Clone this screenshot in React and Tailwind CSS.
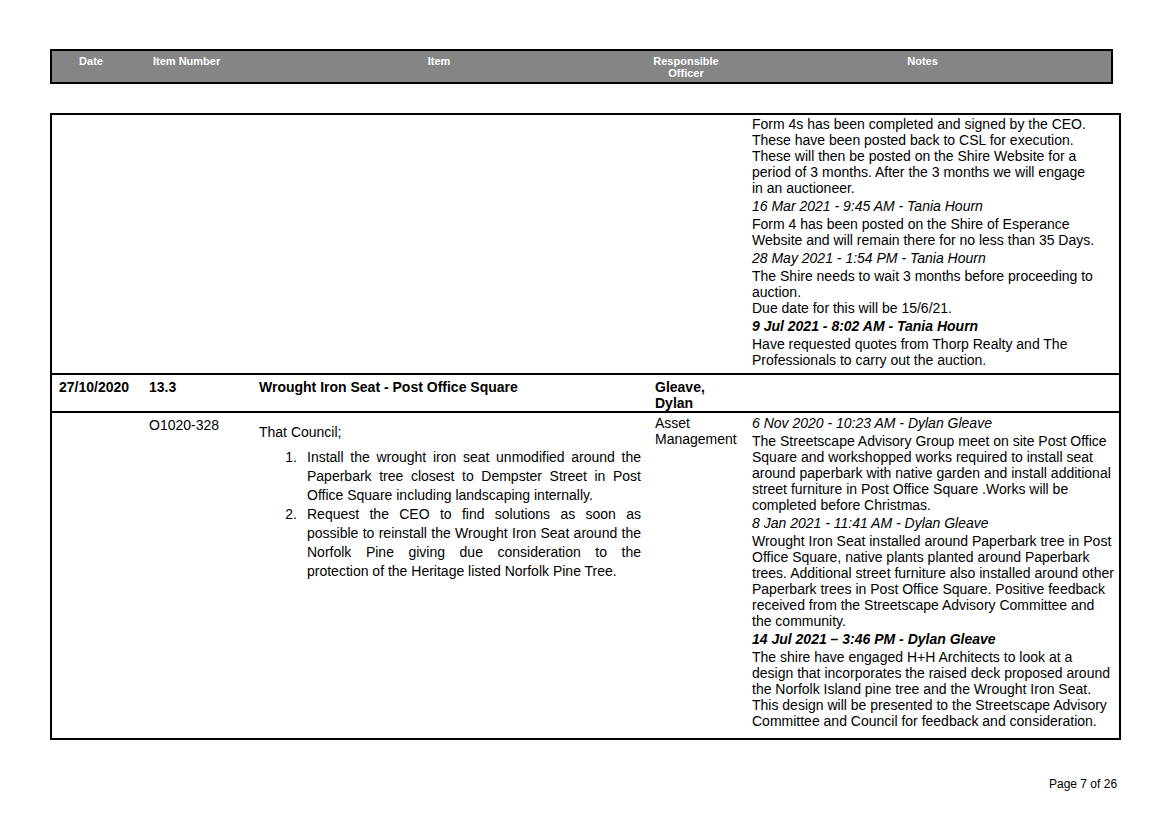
const notesA = [
  ["p", "Form 4s has been completed and signed by the CEO. These have been posted back to CSL for execution. These will then be posted on the Shire Website for a period of 3 months. After the 3 months we will engage in an auctioneer."],
  ["i", "16 Mar 2021 - 9:45 AM - Tania Hourn"],
  ["p", "Form 4 has been posted on the Shire of Esperance Website and will remain there for no less than 35 Days."],
  ["i", "28 May 2021 - 1:54 PM - Tania Hourn"],
  ["p", "The Shire needs to wait 3 months before proceeding to auction.\nDue date for this will be 15/6/21."],
  ["b", "9 Jul 2021 - 8:02 AM - Tania Hourn"],
  ["p", "Have requested quotes from Thorp Realty and The Professionals to carry out the auction."],
];

const notesB = [
  ["i", "6 Nov 2020 - 10:23 AM - Dylan Gleave"],
  ["p", "The Streetscape Advisory Group meet on site Post Office Square and workshopped works required to install seat around paperbark with native garden and install additional street furniture in Post Office Square .Works will be completed before Christmas."],
  ["i", "8 Jan 2021 - 11:41 AM - Dylan Gleave"],
  ["p", "Wrought Iron Seat installed around Paperbark tree in Post Office Square, native plants planted around Paperbark trees. Additional street furniture also installed around other Paperbark trees in Post Office Square. Positive feedback received from the Streetscape Advisory Committee and the community."],
  ["b", "14 Jul 2021 – 3:46 PM - Dylan Gleave"],
  ["p", "The shire have engaged H+H Architects to look at a design that incorporates the raised deck proposed around the Norfolk Island pine tree and the Wrought Iron Seat. This design will be presented to the Streetscape Advisory Committee and Council for feedback and consideration."],
];

function Notes({ items }) {
  return (
    <div className="flex flex-col gap-[2px]">
      {items.map(([k, t], i) => (
        <p
          key={i}
          className={
            "whitespace-pre-line " +
            (k === "i" ? "italic" : k === "b" ? "italic font-bold" : "")
          }
        >
          {t}
        </p>
      ))}
    </div>
  );
}

export default function App() {
  return (
    <div
      className="w-[1160px] h-[821px] bg-white text-black relative text-[14px] leading-[16px]"
      style={{ fontFamily: '"Liberation Sans", Arial, sans-serif' }}
    >
      <div className="pt-[49px] pl-[50px]">
        <div className="w-[1063px] h-[35px] bg-[#858585] border-2 border-black flex text-white font-bold text-[11px] leading-[12px] pt-[4px]">
          <div className="w-[78px] text-center">Date</div>
          <div className="w-[110px] pl-[23px]">Item Number</div>
          <div className="w-[398px] text-center">Item</div>
          <div className="w-[96px] text-center">Responsible<br />Officer</div>
          <div className="flex-1 text-center">Notes</div>
        </div>

        <div className="mt-[29px] w-[1071px] border-2 border-black">
          <div className="grid grid-cols-[95px_110px_396px_96px_1fr] h-[258px]">
            <div />
            <div />
            <div />
            <div />
            <div className="pl-[3px] pt-[1px] pr-[22px]">
              <Notes items={notesA} />
            </div>
          </div>
          <div className="grid grid-cols-[95px_110px_396px_96px_1fr] border-t-2 border-black font-bold h-[38px] pt-[4px]">
            <div className="pl-[7px]">27/10/2020</div>
            <div className="pl-[2px]">13.3</div>
            <div className="pl-[2px]">Wrought Iron Seat - Post Office Square</div>
            <div className="pl-[2px]">Gleave,<br />Dylan</div>
            <div />
          </div>
          <div className="grid grid-cols-[95px_110px_396px_96px_1fr] border-t-2 border-black h-[327px] pt-[2px]">
            <div />
            <div className="pl-[2px] pt-[2px]">O1020-328</div>
            <div className="pl-[2px] pr-[12px] pt-[8px] leading-[19px]">
              <p>That Council;</p>
              <ol className="mt-[6px] pl-[18px] flex flex-col">
                <li className="flex gap-[10px]">
                  <span className="w-[20px] text-right shrink-0">1.</span>
                  <span className="text-justify">Install the wrought iron seat unmodified around the Paperbark tree closest to Dempster Street in Post Office Square including landscaping internally.</span>
                </li>
                <li className="flex gap-[10px]">
                  <span className="w-[20px] text-right shrink-0">2.</span>
                  <span className="text-justify">Request the CEO to find solutions as soon as possible to reinstall the Wrought Iron Seat around the Norfolk Pine giving due consideration to the protection of the Heritage listed Norfolk Pine Tree.</span>
                </li>
              </ol>
            </div>
            <div className="pl-[2px]">Asset<br />Management</div>
            <div className="pl-[3px] pr-[4px]">
              <Notes items={notesB} />
            </div>
          </div>
        </div>
      </div>
      <div className="absolute left-[1049px] top-[776px] text-[12px]">Page 7 of 26</div>
    </div>
  );
}
